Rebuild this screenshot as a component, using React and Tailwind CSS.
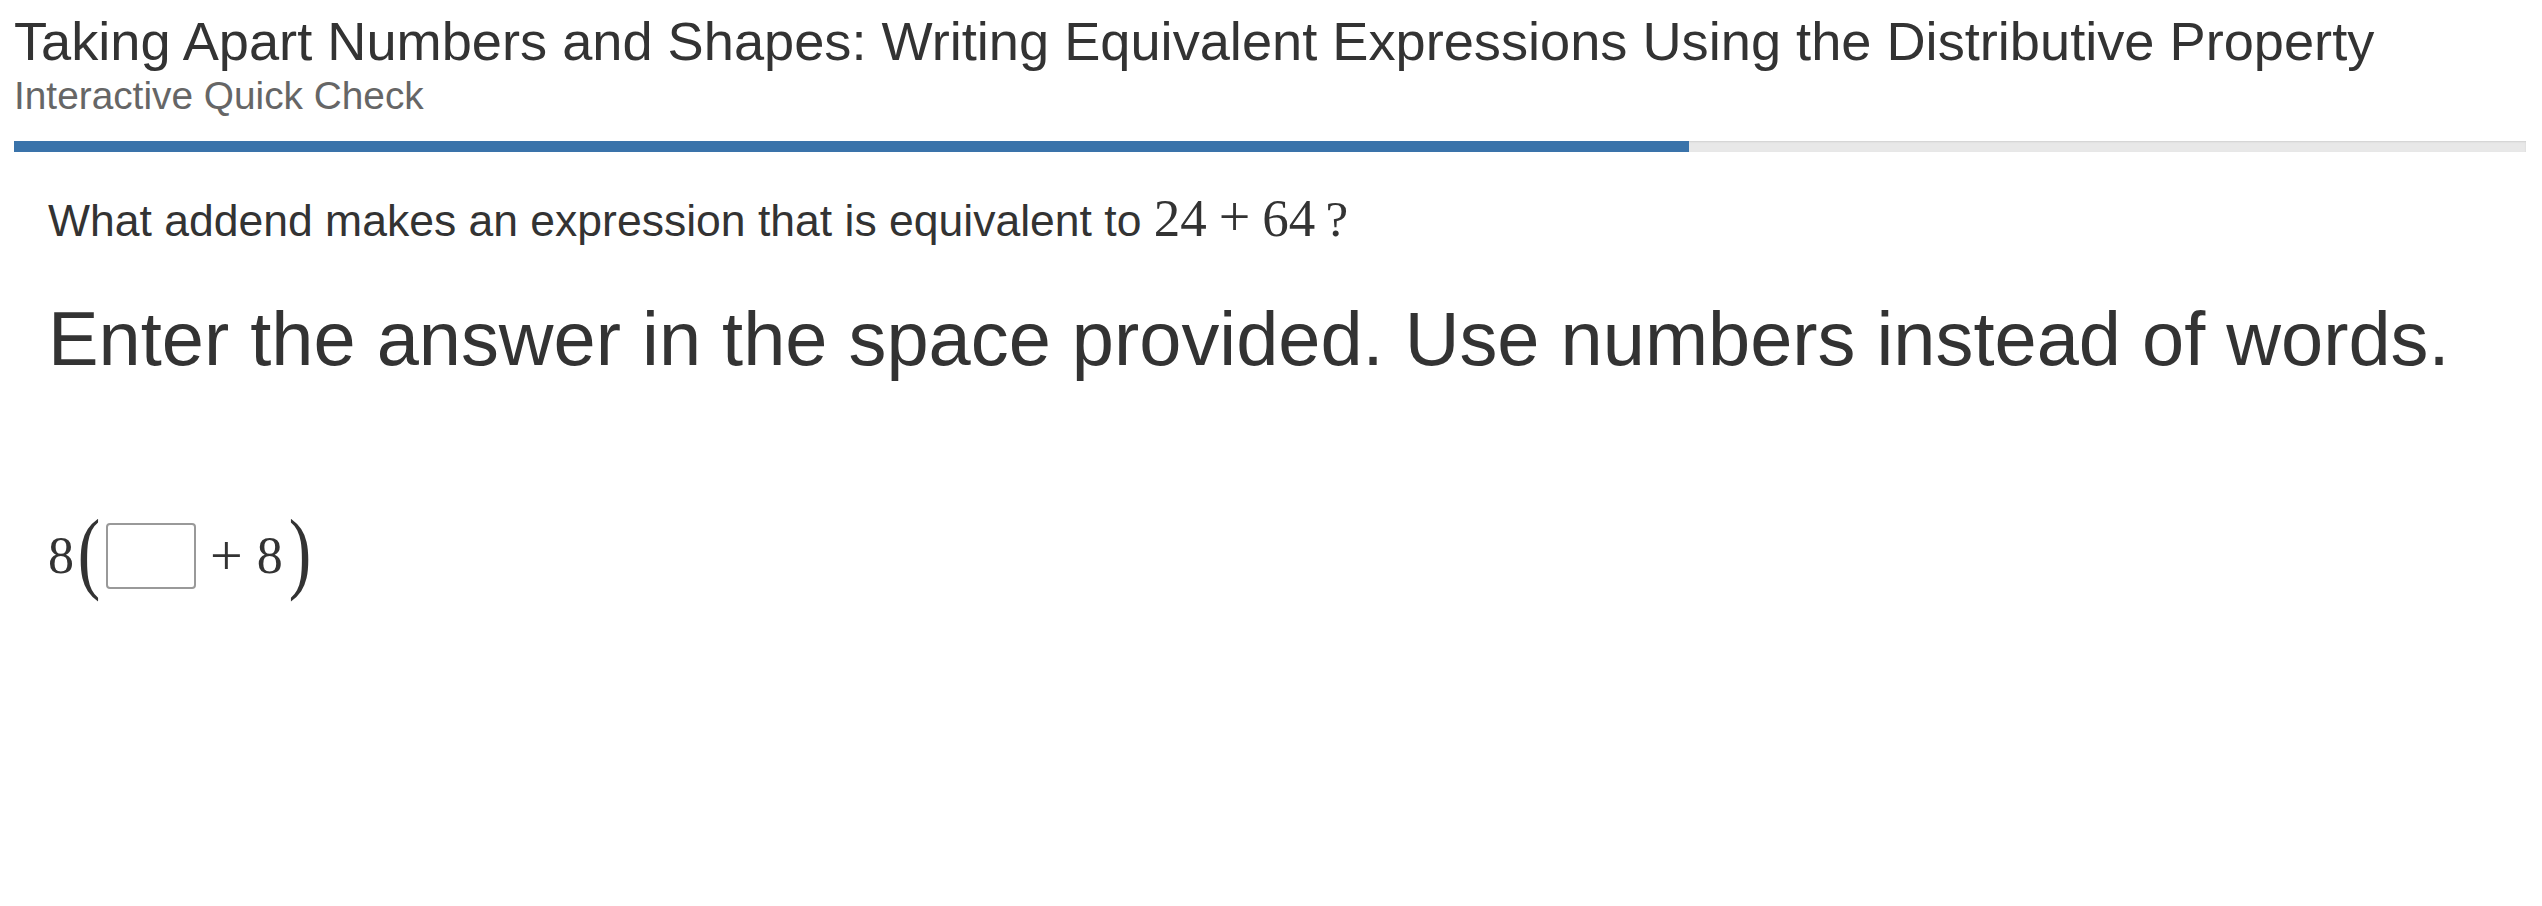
export default function App() {
  return (
    <div className="min-h-screen bg-white text-[#333] font-['Liberation_Sans',Arial,sans-serif]">
      <div className="px-[14px] pt-[11px]">
        <h1 className="text-[54.2px] leading-[60px] font-normal whitespace-nowrap">
          Taking Apart Numbers and Shapes: Writing Equivalent Expressions Using the Distributive Property
        </h1>
        <p className="mt-[4px] text-[38.8px] leading-[41px] text-[#666]">Interactive Quick Check</p>
        <div className="mt-[25px] mr-[2px] h-[11px] bg-[#e8e8e8] shadow-[inset_0_1px_2px_rgba(0,0,0,0.1)] overflow-hidden">
          <div className="h-full w-[1675px] bg-[#3a73aa]" />
        </div>
      </div>

      <div className="px-[48px] pt-[41px]">
        <p className="text-[44.5px] leading-[48px] whitespace-nowrap">
          What addend makes an expression that is equivalent to{" "}
          <span className="font-['Liberation_Serif',serif] text-[53px]">
            24<span className="inline-block mx-[12px] text-[56px]">+</span>64
          </span>
          <span className="font-['Liberation_Serif',serif] text-[51px]">&thinsp;?</span>
        </p>
        <p className="mt-[52px] text-[75.8px] leading-[84px] whitespace-nowrap">
          Enter the answer in the space provided. Use numbers instead of words.
        </p>

        <div className="mt-[134px] flex items-center font-['Liberation_Serif',serif] text-[52px] leading-none">
          <span>8</span>
          <span className="text-[90px] font-light leading-none -mt-[8px] scale-x-75">(</span>
          <input
            type="text"
            aria-label="addend"
            className="w-[90px] h-[66px] border-2 border-[#999] rounded-[4px] ml-[2px] mr-[14px] outline-none"
          />
          <span className="text-[58px]">+</span>
          <span className="ml-[14px]">8</span>
          <span className="text-[90px] font-light leading-none -mt-[8px] ml-[2px] scale-x-75">)</span>
        </div>
      </div>
    </div>
  );
}
